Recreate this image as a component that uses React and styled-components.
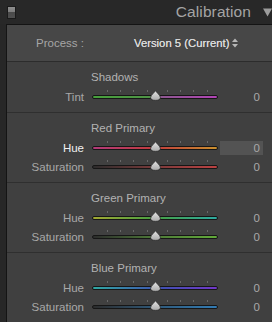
import React from 'react';
import styled, { createGlobalStyle } from 'styled-components';

const GlobalStyle = createGlobalStyle`
  html, body {
    margin: 0;
    padding: 0;
    background: #282828;
  }
  body {
    font-family: "Liberation Sans", Arial, sans-serif;
  }
`;

const Frame = styled.div`
  width: 272px;
  height: 322px;
  overflow: hidden;
  display: flex;
  flex-direction: column;
  background: #282828;
`;

const Header = styled.div`
  height: 24px;
  display: flex;
  align-items: center;
  padding-left: 7px;
  flex-shrink: 0;
`;

const Toggle = styled.div`
  width: 7px;
  height: 11px;
  border: 1px solid #1a1a1a;
  background: linear-gradient(#8e8e8e 0, #7c7c7c 50%, #4a4a4a 50%, #505050 100%);
`;

const Title = styled.div`
  margin-left: auto;
  margin-right: 12px;
  font-size: 15.5px;
  color: #a4a4a4;
  letter-spacing: 0.1px;
`;

const Body = styled.div`
  flex: 1;
  display: flex;
`;

const Strip = styled.div`
  width: 6px;
  background: #272727;
`;

const Panel = styled.div`
  flex: 1;
  border-left: 1px solid #141414;
  border-top: 1px solid #141414;
  background: #404040;
  display: flex;
  flex-direction: column;
`;

const ProcessRow = styled.div`
  height: 36px;
  display: flex;
  align-items: center;
  background: #474747;
  border-bottom: 1px solid #2c2c2c;
`;

const ProcessLabel = styled.div`
  width: 77px;
  text-align: right;
  font-size: 11.5px;
  color: #a6a6a6;
`;

const ProcessValue = styled.div`
  margin-left: 50px;
  display: flex;
  align-items: center;
  gap: 3px;
  font-size: 11.3px;
  color: #dadada;
  text-shadow: 0 0 0.4px #dadada;
`;

const Section = styled.div`
  padding: 7px 0 6px;
  border-bottom: 1px solid #2f2f2f;
`;

const SectionTitle = styled.div`
  height: 16px;
  line-height: 16px;
  padding-left: 84px;
  margin-bottom: 2px;
  font-size: 11.5px;
  color: #b2b2b2;
`;

const Row = styled.div`
  height: 19px;
  display: flex;
  align-items: center;
`;

const Label = styled.div`
  width: 77px;
  text-align: right;
  font-size: 11.5px;
  color: ${p => (p.$active ? '#f0f0f0' : '#a8a8a8')};
`;

const Slider = styled.div`
  position: relative;
  margin-left: 8px;
  width: 126px;
  height: 19px;
`;

const Track = styled.div`
  position: absolute;
  left: 0;
  right: 0;
  top: 7.5px;
  height: 2px;
  border: 1px solid #161616;
  border-radius: 2px;
  background: ${p => p.$fill};
`;

const Tick = styled.div`
  position: absolute;
  top: 3px;
  width: 1px;
  height: 2px;
  background: #696969;
`;

const Thumb = styled.svg`
  position: absolute;
  left: 58px;
  top: 3px;
`;

const Value = styled.div`
  margin-left: 2px;
  width: 43px;
  height: 14px;
  line-height: 14px;
  padding-right: 3px;
  box-sizing: border-box;
  text-align: right;
  font-size: 11.5px;
  color: #a8a8a8;
  background: ${p => (p.$active ? '#535353' : 'transparent')};
`;

const ticks = [15, 28, 41, 55, 75, 88, 101, 115];

const SliderRow = ({ label, fill, active }) => (
  <Row>
    <Label $active={active}>{label}</Label>
    <Slider>
      {ticks.map(t => (
        <Tick key={t} style={{ left: t }} />
      ))}
      <Track $fill={fill} />
      <Thumb width="11" height="11" viewBox="0 0 11 11">
        <defs>
          <linearGradient id="thumbFill" x1="0" y1="0" x2="0" y2="1">
            <stop offset="0" stopColor="#e6e6e6" />
            <stop offset="1" stopColor="#a9a9a9" />
          </linearGradient>
        </defs>
        <path
          d="M5.5 0.6 C6.4 2.6 10.4 5 10.4 7.6 C10.4 9.6 8.4 10.4 5.5 10.4 C2.6 10.4 0.6 9.6 0.6 7.6 C0.6 5 4.6 2.6 5.5 0.6 Z"
          fill="url(#thumbFill)"
          stroke="#262626"
          strokeWidth="0.8"
        />
      </Thumb>
    </Slider>
    <Value $active={active}>0</Value>
  </Row>
);

const sections = [
  {
    title: 'Shadows',
    rows: [
      { label: 'Tint', fill: 'linear-gradient(90deg, #47a03c, #4f9446 45%, #8d5790 55%, #b244b6)' },
    ],
  },
  {
    title: 'Red Primary',
    rows: [
      { label: 'Hue', active: true, fill: 'linear-gradient(90deg, #b23a7a, #c23c3c 50%, #c9902e)' },
      { label: 'Saturation', fill: 'linear-gradient(90deg, #2c2c2c, #7a3a3a 50%, #bc4242)' },
    ],
  },
  {
    title: 'Green Primary',
    rows: [
      { label: 'Hue', fill: 'linear-gradient(90deg, #a2a832, #46a042 50%, #2eaaa2)' },
      { label: 'Saturation', fill: 'linear-gradient(90deg, #2c2c2c, #4e7a38 50%, #62aa3a)' },
    ],
  },
  {
    title: 'Blue Primary',
    rows: [
      { label: 'Hue', fill: 'linear-gradient(90deg, #30a8a2, #4050b2 55%, #7238c8)' },
      { label: 'Saturation', fill: 'linear-gradient(90deg, #2c2c2c, #2f5878 50%, #337cb4)' },
    ],
  },
];

export default function App() {
  return (
    <>
      <GlobalStyle />
      <Frame>
        <Header>
          <Toggle />
          <Title>Calibration</Title>
          <svg width="9" height="9" viewBox="0 0 9 9">
            <polygon points="0,0.5 9,0.5 4.5,8.5" fill="#9c9c9c" />
          </svg>
        </Header>
        <Body>
          <Strip />
          <Panel>
            <ProcessRow>
              <ProcessLabel>Process :</ProcessLabel>
              <ProcessValue>
                Version 5 (Current)
                <svg width="6" height="10" viewBox="0 0 6 10">
                  <polygon points="0,4 6,4 3,0.5" fill="#b8b8b8" />
                  <polygon points="0,6 6,6 3,9.5" fill="#b8b8b8" />
                </svg>
              </ProcessValue>
            </ProcessRow>
            {sections.map(s => (
              <Section key={s.title}>
                <SectionTitle>{s.title}</SectionTitle>
                {s.rows.map(r => (
                  <SliderRow key={r.label} {...r} />
                ))}
              </Section>
            ))}
          </Panel>
        </Body>
      </Frame>
    </>
  );
}
